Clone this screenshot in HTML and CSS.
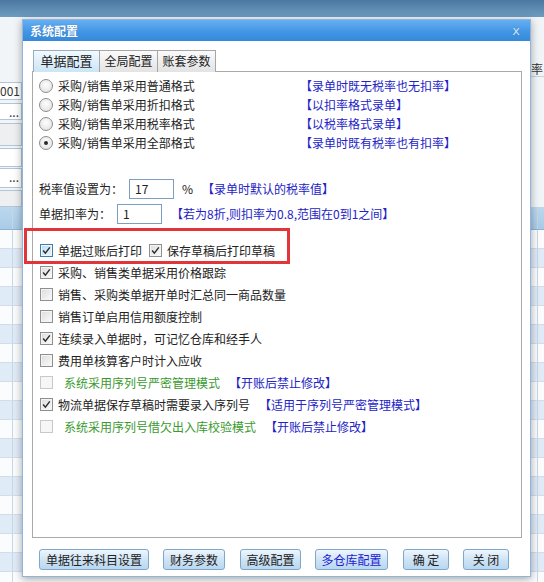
FILE: index.html
```html
<!DOCTYPE html>
<html lang="zh">
<head>
    <meta charset="UTF-8">
    <title>系统配置</title>
    <link rel="stylesheet" href="styles.css">
</head>
<body>
    <div class="app">
        <div class="topbar"></div>
        <div class="form">
            <div class="form-head"><span class="rlabel">率</span></div>
            <div class="field f1">001</div>
            <div class="field f2">...</div>
            <div class="field f3 gray"></div>
            <div class="field f4"></div>
            <div class="field f5">...</div>
            <div class="field f6 gray"></div>
        </div>
        <div class="grid">
            <div class="grow ghead"><span class="c1"></span><span class="c2"></span><span class="c3"></span></div>
            <div class="grow"><span class="c1"></span><span class="c2"></span><span class="c3"></span></div>
            <div class="grow alt"><span class="c1"></span><span class="c2"></span><span class="c3"></span></div>
            <div class="grow"><span class="c1"></span><span class="c2"></span><span class="c3"></span></div>
            <div class="grow alt"><span class="c1"></span><span class="c2"></span><span class="c3"></span></div>
            <div class="grow"><span class="c1"></span><span class="c2"></span><span class="c3"></span></div>
            <div class="grow alt"><span class="c1"></span><span class="c2"></span><span class="c3"></span></div>
            <div class="grow"><span class="c1"></span><span class="c2"></span><span class="c3"></span></div>
            <div class="grow alt"><span class="c1"></span><span class="c2"></span><span class="c3"></span></div>
            <div class="grow"><span class="c1"></span><span class="c2"></span><span class="c3"></span></div>
            <div class="grow alt"><span class="c1"></span><span class="c2"></span><span class="c3"></span></div>
            <div class="grow"><span class="c1"></span><span class="c2"></span><span class="c3"></span></div>
            <div class="grow alt"><span class="c1"></span><span class="c2"></span><span class="c3"></span></div>
            <div class="grow"><span class="c1"></span><span class="c2"></span><span class="c3"></span></div>
            <div class="grow alt"><span class="c1"></span><span class="c2"></span><span class="c3"></span></div>
            <div class="grow"><span class="c1"></span><span class="c2"></span><span class="c3"></span></div>
            <div class="grow alt"><span class="c1"></span><span class="c2"></span><span class="c3"></span></div>
            <div class="grow"><span class="c1"></span><span class="c2"></span><span class="c3"></span></div>
            <div class="grow alt"><span class="c1"></span><span class="c2"></span><span class="c3"></span></div>
            <div class="grow"><span class="c1"></span><span class="c2"></span><span class="c3"></span></div>
        </div>
    </div>

    <div class="dialog">
        <div class="dlg-title">
            <span>系统配置</span>
            <span class="dlg-close">x</span>
        </div>
        <div class="dlg-body">
            <div class="tabs">
                <span class="tab active">单据配置</span>
                <span class="tab">全局配置</span>
                <span class="tab">账套参数</span>
            </div>
            <div class="panel">
                <div class="radios">
                    <div class="opt">
                        <span class="radio"></span>
                        <span class="opt-text wide">采购/销售单采用普通格式</span>
                        <span class="note">【录单时既无税率也无扣率】</span>
                    </div>
                    <div class="opt">
                        <span class="radio"></span>
                        <span class="opt-text wide">采购/销售单采用折扣格式</span>
                        <span class="note">【以扣率格式录单】</span>
                    </div>
                    <div class="opt">
                        <span class="radio"></span>
                        <span class="opt-text wide">采购/销售单采用税率格式</span>
                        <span class="note">【以税率格式录单】</span>
                    </div>
                    <div class="opt">
                        <span class="radio on"></span>
                        <span class="opt-text wide">采购/销售单采用全部格式</span>
                        <span class="note">【录单时既有税率也有扣率】</span>
                    </div>
                </div>

                <div class="field-row tax">
                    <span>税率值设置为：</span>
                    <span class="input">17</span>
                    <span class="pct">%</span>
                    <span class="note">【录单时默认的税率值】</span>
                </div>
                <div class="field-row">
                    <span>单据扣率为：</span>
                    <span class="input">1</span>
                    <span class="note gap">【若为8折,则扣率为0.8,范围在0到1之间】</span>
                </div>

                <div class="checks">
                    <div class="opt chk">
                        <span class="cb on hover"><svg viewBox="0 0 13 13"><path d="M2.5 6.5 L5.2 9.6 L10.4 2.8"/></svg></span>
                        <span class="opt-text">单据过账后打印</span>
                        <span class="cb on second"><svg viewBox="0 0 13 13"><path d="M2.5 6.5 L5.2 9.6 L10.4 2.8"/></svg></span>
                        <span class="opt-text">保存草稿后打印草稿</span>
                    </div>
                    <div class="opt chk">
                        <span class="cb on"><svg viewBox="0 0 13 13"><path d="M2.5 6.5 L5.2 9.6 L10.4 2.8"/></svg></span>
                        <span class="opt-text">采购、销售类单据采用价格跟踪</span>
                    </div>
                    <div class="opt chk">
                        <span class="cb"></span>
                        <span class="opt-text">销售、采购类单据开单时汇总同一商品数量</span>
                    </div>
                    <div class="opt chk">
                        <span class="cb"></span>
                        <span class="opt-text">销售订单启用信用额度控制</span>
                    </div>
                    <div class="opt chk">
                        <span class="cb on"><svg viewBox="0 0 13 13"><path d="M2.5 6.5 L5.2 9.6 L10.4 2.8"/></svg></span>
                        <span class="opt-text">连续录入单据时，可记忆仓库和经手人</span>
                    </div>
                    <div class="opt chk">
                        <span class="cb"></span>
                        <span class="opt-text">费用单核算客户时计入应收</span>
                    </div>
                    <div class="opt chk">
                        <span class="cb off"></span>
                        <span class="opt-text green">系统采用序列号严密管理模式</span>
                        <span class="note gap">【开账后禁止修改】</span>
                    </div>
                    <div class="opt chk">
                        <span class="cb on"><svg viewBox="0 0 13 13"><path d="M2.5 6.5 L5.2 9.6 L10.4 2.8"/></svg></span>
                        <span class="opt-text">物流单据保存草稿时需要录入序列号</span>
                        <span class="note gap">【适用于序列号严密管理模式】</span>
                    </div>
                    <div class="opt chk">
                        <span class="cb off"></span>
                        <span class="opt-text green">系统采用序列号借欠出入库校验模式</span>
                        <span class="note gap">【开账后禁止修改】</span>
                    </div>
                </div>
            </div>

            <div class="buttons">
                <button class="btn b-subject">单据往来科目设置</button>
                <button class="btn b-finance">财务参数</button>
                <button class="btn b-advanced">高级配置</button>
                <button class="btn b-store blue">多仓库配置</button>
                <button class="btn b-ok">确 定</button>
                <button class="btn b-close">关 闭</button>
            </div>
        </div>
        <div class="mark"></div>
    </div>
</body>
</html>
```

FILE: styles.css
```css
* {
    box-sizing: border-box;
}
body {
    margin: 0;
    width: 544px;
    height: 582px;
    overflow: hidden;
    position: relative;
    font-family: "Noto Sans CJK SC", "Noto Sans", sans-serif;
    font-size: 12px;
    color: #222;
    background: #f2f5f8;
}

/* background window */
.topbar {
    height: 17px;
    background: linear-gradient(#4b789f, #6d9cc1);
}
.form {
    height: 190px;
    display: flex;
    flex-direction: column;
}
.form-head {
    height: 60px;
    display: flex;
    justify-content: flex-end;
    align-items: flex-end;
}
.rlabel {
    width: 13px;
    line-height: 14px;
    font-size: 12px;
    border-bottom: 1px solid #c3d3e3;
    color: #333;
}
.field {
    width: 22px;
    border: 1px solid #b3c5d8;
    border-left: none;
    background: #fff;
    text-align: right;
    padding-right: 2px;
    color: #333;
    font-size: 12px;
    line-height: 15px;
    overflow: hidden;
}
.field.gray {
    background: #eeeff1;
}
.f1 { margin-top: 5px; height: 18px; }
.f2 { margin-top: 3px; height: 18px; }
.f3 { margin-top: 3px; height: 23px; }
.f4 { margin-top: 2px; height: 19px; }
.f5 { margin-top: 1px; height: 20px; }
.f6 { margin-top: 2px; height: 17px; }

.grid {
    display: flex;
    flex-direction: column;
}
.grow {
    height: 19px;
    display: flex;
    background: #fbfcfe;
    border-bottom: 1px solid #d3dde8;
}
.grow.alt {
    background: #dfebf7;
}
.grow.ghead {
    height: 23px;
    background: linear-gradient(#bcd8ef, #a9cbe7);
    border-bottom: 1px solid #8fb3d3;
}
.c1 {
    width: 13px;
    border-right: 1px solid #c9d6e3;
}
.c2 {
    flex: 1;
    border-right: 1px solid #c9d6e3;
}
.c3 {
    width: 6px;
}

/* dialog */
.dialog {
    position: absolute;
    left: 22px;
    top: 19px;
    width: 509px;
    height: 558px;
    background: #fff;
    border: 1px solid #8fb5da;
    box-shadow: 0 2px 8px rgba(0, 0, 0, 0.35);
}
.dlg-title {
    height: 21px;
    background: linear-gradient(#66aff2, #4396e4 55%, #3589db);
    color: #fff;
    font-weight: bold;
    padding: 0 10px 0 7px;
    display: flex;
    justify-content: space-between;
    align-items: center;
    text-shadow: 0 0 1px #2a6db0;
}
.dlg-close {
    color: #cfe3f6;
    font-weight: normal;
    font-family: "DejaVu Sans", sans-serif;
    font-size: 13px;
}
.dlg-body {
    padding: 9px 8px 0 9px;
}
.tabs {
    display: flex;
    padding-left: 1px;
    margin-bottom: -1px;
    position: relative;
}
.tab {
    height: 22px;
    line-height: 20px;
    text-align: center;
    border: 1px solid #a6a6a6;
    border-bottom: none;
    background: linear-gradient(#fafafa, #e3e3e3);
    width: 59px;
    margin-left: -1px;
}
.tab:first-child {
    margin-left: 0;
}
.tab.active {
    width: 67px;
    background: linear-gradient(#f2f9fe, #cbe5f7);
    border-color: #98aebf;
    font-size: 13px;
}
.panel {
    height: 467px;
    border: 1px solid #a9a9a9;
    padding: 4px 0 0 5px;
}

.opt {
    display: flex;
    align-items: center;
    white-space: nowrap;
}
.radios .opt {
    height: 19px;
}
.radio {
    width: 14px;
    height: 14px;
    margin-left: 1px;
    border-radius: 50%;
    border: 1px solid #8c8c8c;
    background: radial-gradient(circle at 50% 40%, #fdfdfd, #dedede);
    display: flex;
    align-items: center;
    justify-content: center;
}
.radio.on::after {
    content: "";
    width: 4px;
    height: 4px;
    border-radius: 50%;
    background: #2b2b2b;
}
.opt-text {
    margin-left: 5px;
}
.opt-text.wide {
    width: 242px;
}
.note {
    color: #2323c6;
}
.note.gap {
    margin-left: 9px;
}
.green {
    color: #3a9a2f;
    margin-left: 11px;
}

.field-row {
    display: flex;
    align-items: center;
    height: 25px;
    padding-left: 1px;
}
.field-row.tax {
    margin-top: 24px;
}
.input {
    width: 45px;
    height: 20px;
    margin-left: 6px;
    border: 1px solid #7b9ec2;
    padding-left: 5px;
    line-height: 18px;
}
.pct {
    margin: 0 9px 0 8px;
}

.checks {
    margin-top: 13px;
}
.chk {
    height: 22px;
    padding-left: 2px;
}
.cb {
    width: 13px;
    height: 13px;
    border: 1px solid #8e8f8f;
    background: linear-gradient(135deg, #dcdcdc, #fbfbfb);
    box-shadow: inset 0 0 0 1px #f4f4f4;
    display: flex;
}
.cb.hover {
    border-color: #3c7fb1;
    background: linear-gradient(135deg, #b9dcf2, #eaf6fd);
}
.cb.second {
    margin-left: 7px;
}
.cb.off {
    border-color: #c9c9c9;
    background: #f6f6f6;
    box-shadow: none;
}
.cb svg {
    width: 11px;
    height: 11px;
}
.cb path {
    fill: none;
    stroke: #2b2b2b;
    stroke-width: 1.7;
}

.buttons {
    display: flex;
    margin-top: 11px;
    padding-left: 7px;
    gap: 14px;
}
.btn {
    height: 21px;
    padding: 0;
    font-family: inherit;
    font-size: 12px;
    color: #222;
    border: 1px solid #7ea7cb;
    border-radius: 3px;
    background: linear-gradient(#eef6fd, #cfe4f5 50%, #b9d7ef);
}
.btn.blue {
    color: #1c1cd6;
}
.b-subject { width: 110px; }
.b-finance { width: 62px; }
.b-advanced { width: 61px; margin-left: 1px; }
.b-store { width: 73px; }
.b-ok { width: 46px; margin-left: 1px; }
.b-close { width: 46px; }

/* red highlight */
.mark {
    position: absolute;
    left: 1px;
    top: 208px;
    width: 266px;
    height: 36px;
    border: 3px solid #e2353a;
}
```
